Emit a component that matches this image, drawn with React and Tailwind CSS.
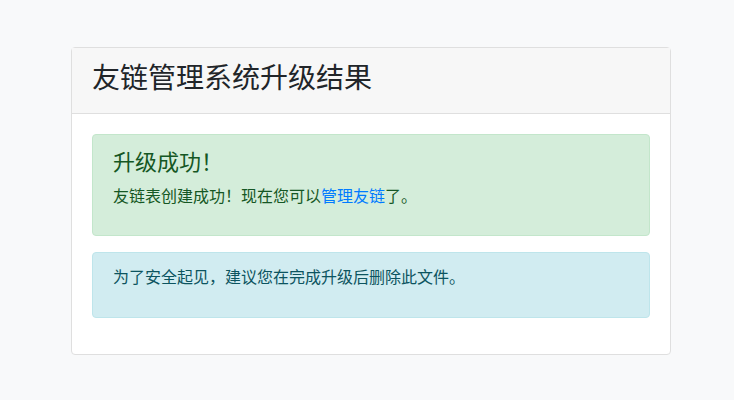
import React from 'react';

const font = { fontFamily: '"Noto Sans CJK SC", "Liberation Sans", sans-serif' };

export default function App() {
  return (
    <div className="min-h-[400px] w-full bg-[#f8f9fa] pt-[47px] text-[#212529]" style={font}>
      <div className="ml-[71px] w-[600px] rounded border border-[#dfdfdf] bg-white">
        {/* Header */}
        <div className="h-[66px] border-b border-[#dfdfdf] bg-[#f7f7f7] px-5 pt-[11px]">
          <h3 className="text-[28px] leading-[34px]">友链管理系统升级结果</h3>
        </div>

        {/* Body */}
        <div className="p-5">
          <div className="mb-4 h-[102px] rounded border border-[#c3e6cb] bg-[#d4edda] px-5 pt-[11px] text-[#155724]">
            <h4 className="mb-2 text-[22px] leading-[29px]">升级成功！</h4>
            <p className="text-[16px] leading-6">
              友链表创建成功！现在您可以<a href="#" className="text-[#007bff]">管理友链</a>了。
            </p>
          </div>
          <div className="mb-4 h-[66px] rounded border border-[#bee5eb] bg-[#d1ecf1] px-5 pt-[11px] text-[#0c5460]">
            <p className="text-[16px] leading-6">为了安全起见，建议您在完成升级后删除此文件。</p>
          </div>
        </div>
      </div>
    </div>
  );
}
